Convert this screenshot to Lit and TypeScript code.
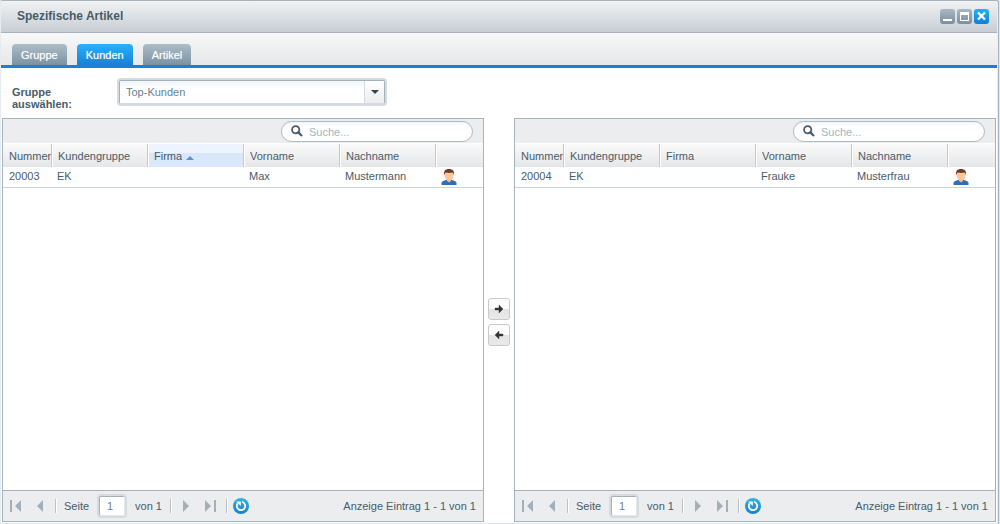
import { LitElement, html, css, svg } from "lit";
import { customElement, property } from "lit/decorators.js";

interface Customer {
  number: string;
  group: string;
  company: string;
  firstName: string;
  lastName: string;
}

const icons = {
  search: svg`<svg width="12" height="12" viewBox="0 0 12 12" fill="none" stroke="#475c6a"><circle cx="4.7" cy="4.7" r="3.6" stroke-width="1.8"/><path d="M7.4 7.4 L11 11" stroke-width="2.2"/></svg>`,
  first: svg`<svg width="12" height="12" viewBox="0 0 12 12" fill="#a3b0bb"><path d="M0 0h2v12H0zM11 0v12L5 6z"/></svg>`,
  prev: svg`<svg width="12" height="12" viewBox="0 0 12 12" fill="#a3b0bb"><path d="M9 0v12L3 6z"/></svg>`,
  next: svg`<svg width="12" height="12" viewBox="0 0 12 12" fill="#a3b0bb"><path d="M2 0v12l6-6z"/></svg>`,
  last: svg`<svg width="12" height="12" viewBox="0 0 12 12" fill="#a3b0bb"><path d="M9 0h2v12H9zM0 0v12l6-6z"/></svg>`,
  refresh: svg`<svg width="16" height="16" viewBox="0 0 16 16"><defs><linearGradient id="r" x2="0" y2="1"><stop stop-color="#36b1e4"/><stop offset="1" stop-color="#1581cb"/></linearGradient></defs><circle cx="8" cy="8" r="8" fill="url(#r)"/><path d="M4.700 5.400A4.200 4.200 0 1 0 9 3.900" fill="none" stroke="#fff" stroke-width="1.800"/><path d="M3.200 3.500h4.600v4.500z" fill="#fff"/></svg>`,
  right: svg`<svg width="10" height="8" viewBox="0 0 10 8" fill="#333"><path d="M1 3h4V0l4 4-4 4V5H1z" stroke="#333" stroke-width="0.400"/></svg>`,
  left: svg`<svg width="10" height="8" viewBox="0 0 10 8" fill="#333"><path d="M9 3H5V0L1 4l4 4V5h4z" stroke="#333" stroke-width="0.400"/></svg>`,
  user: svg`<svg width="16" height="16" viewBox="0 0 16 16"><path d="M0.500 16v-2c0-1.500 2-2.300 5-3h5c3 .7 5 1.500 5 3v2z" fill="#2f6dbd"/><path d="M6 9h4v3L8 13.500 6 12z" fill="#f1b284"/><path d="M3.500 3.500h9v2.700c0 3-2 5.300-4.500 5.300s-4.500-2.300-4.500-5.300z" fill="#fbc79c"/><path d="M3.200 6.300C2.400 2 4.200 0 8 0s5.700 2 4.800 6.300l-.8-2.500C9.500 4 7 4 4.200 3.800z" fill="#6f3d20"/></svg>`,
};

@customElement("customer-grid")
export class CustomerGrid extends LitElement {
  static styles = css`
    :host {
      display: flex;
      flex-direction: column;
      flex: 1 1 0;
      min-width: 0;
      border: 1px solid #a4b5c0;
      background: #fff;
    }
    .toolbar {
      display: flex;
      justify-content: flex-end;
      align-items: center;
      height: 25px;
      padding-right: 10px;
      background: #ebedef;
      border-bottom: 1px solid #fff;
      box-sizing: border-box;
    }
    .search {
      display: flex;
      align-items: center;
      gap: 6px;
      width: 192px;
      height: 21px;
      padding: 0 9px;
      box-sizing: border-box;
      border: 1px solid #a9bac8;
      border-radius: 11px;
      background: linear-gradient(#f3f5f6, #fff 5px);
    }
    .search svg { flex: none; }
    .search input {
      flex: 1;
      min-width: 0;
      padding: 2px 0 0;
      border: 0;
      outline: 0;
      background: none;
      font: inherit;
      color: #475c6a;
    }
    .search input::placeholder { color: #a2b4c1; opacity: 1; }
    table {
      width: 100%;
      table-layout: fixed;
      border-collapse: separate;
      border-spacing: 0;
    }
    .narrow { width: 49px; }
    .wide { width: 96px; }
    th, td {
      padding: 0 0 0 5px;
      box-sizing: border-box;
      overflow: hidden;
      white-space: nowrap;
      text-align: left;
      font-weight: normal;
    }
    th {
      height: 23px;
      padding-top: 1px;
      border-right: 1px solid #c3cbd1;
      border-left: 1px solid #fff;
      background: linear-gradient(#fafafa, #e5e6e8);
    }
    th:first-child { border-left-color: transparent; }
    th:last-child { border-right: 0; }
    .sorted { background: linear-gradient(#edf4fd 40%, #d7e6f9 40%, #d9e8fb); }
    .arrow {
      display: inline-block;
      margin-left: 4px;
      border: 4px solid transparent;
      border-top: 0;
      border-bottom-color: #5f90cf;
    }
    td {
      height: 21px;
      padding-bottom: 2px;
      border-bottom: 1px solid #cad5db;
    }
    td:first-child { padding-left: 6px; }
    td svg { display: block; margin-top: 2px; }
    .body { flex: 1; }
    .pager {
      display: flex;
      align-items: center;
      height: 30px;
      padding: 0 7px;
      border-top: 1px solid #a4b5c0;
      background: #ebedef;
    }
    .pager button {
      display: flex;
      padding: 0;
      border: 0;
      background: none;
    }
    .group { display: flex; align-items: center; gap: 9px; }
    .group button:first-of-type { margin-right: 3px; }
    .split { width: 1px; height: 14px; background: #bac3ca; border-right: 1px solid #fff; }
    .page { display: flex; align-items: center; margin: 0 8px 0 7px; }
    .page input {
      width: 26px;
      height: 20px;
      margin: 0 10px;
      padding: 0 0 0 7px;
      box-sizing: border-box;
      border: 1px solid #a4b1bd;
      border-right-color: #e3e8eb;
      border-bottom-color: #e3e8eb;
      border-radius: 2px;
      box-shadow: 0 0 0 2px #d5dbe1;
      background: #fff;
      color: #627f93;
      font: inherit;
      outline: 0;
    }
    .pager .reload { margin-left: 5px; }
    .status { margin-left: auto; white-space: nowrap; }
  `;

  @property({ attribute: false }) rows: Customer[] = [];
  @property() sort = "";

  private columns = ["Nummer", "Kundengruppe", "Firma", "Vorname", "Nachname"];

  render() {
    return html`
      <div class="toolbar">
        <label class="search">${icons.search}<input type="text" placeholder="Suche..." aria-label="Suche" /></label>
      </div>
      <div class="body">
        <table>
          <colgroup>
            <col class="narrow" /><col class="wide" /><col class="wide" /><col class="wide" /><col class="wide" /><col />
          </colgroup>
          <thead>
            <tr>
              ${this.columns.map((c) => html`<th class=${c === this.sort ? "sorted" : ""}>${c}${c === this.sort ? html`<span class="arrow"></span>` : ""}</th>`)}
              <th></th>
            </tr>
          </thead>
          <tbody>
            ${this.rows.map((r) => html`<tr>
              <td>${r.number}</td><td>${r.group}</td><td>${r.company}</td><td>${r.firstName}</td><td>${r.lastName}</td><td>${icons.user}</td>
            </tr>`)}
          </tbody>
        </table>
      </div>
      <div class="pager">
        <div class="group">
          <button aria-label="Erste Seite">${icons.first}</button>
          <button aria-label="Vorherige Seite">${icons.prev}</button>
          <span class="split"></span>
        </div>
        <label class="page">Seite<input type="text" value="1" />von 1</label>
        <div class="group">
          <span class="split"></span>
          <button aria-label="Nächste Seite">${icons.next}</button>
          <button aria-label="Letzte Seite">${icons.last}</button>
          <span class="split"></span>
        </div>
        <button class="reload" aria-label="Aktualisieren">${icons.refresh}</button>
        <span class="status">Anzeige Eintrag 1 - 1 von 1</span>
      </div>
    `;
  }
}

@customElement("app-root")
export class AppRoot extends LitElement {
  static styles = css`
    :host {
      display: flex;
      min-height: 100vh;
      box-sizing: border-box;
      padding-right: 1px;
      background: #dcebf3;
      font: 11px/13px "Liberation Sans", Arial, sans-serif;
      color: #475c6a;
    }
    .window {
      flex: 1;
      min-width: 0;
      display: flex;
      flex-direction: column;
      padding-right: 1px;
      border: 1px solid #a3b4c0;
      border-left-color: #e6ebef;
      border-bottom-color: #dfe6ea;
      border-radius: 3px 3px 0 0;
      background: linear-gradient(to left, #e9eff2 1px, #fff 1px);
      overflow: hidden;
    }
    .title {
      display: flex;
      align-items: center;
      height: 31px;
      padding: 0 8px 0 16px;
      border-bottom: 1px solid #a3b4c0;
      background: linear-gradient(#f1f2f2, #c7ced4);
    }
    h1 { flex: 1; margin: 0; padding-bottom: 2px; font-size: 12px; line-height: 14px; }
    .tools { display: flex; gap: 2px; }
    .tools button {
      display: flex;
      width: 15px;
      height: 15px;
      padding: 0;
      border: 0;
      border-radius: 3px;
      background: linear-gradient(#a9b8c4, #7a8e9e);
    }
    .tools .close { background: linear-gradient(#22b2fb, #0c7ed6); }
    nav {
      display: flex;
      align-items: flex-end;
      gap: 10px;
      height: 32px;
      padding: 0 11px;
      border-bottom: 3px solid #1a7fd5;
      background: linear-gradient(#f8f8f8, #e6e7e9);
    }
    nav button {
      height: 21px;
      padding: 1px 9px 0;
      border: 0;
      border-radius: 4px 4px 0 0;
      background: linear-gradient(#adbdc8, #7b92a2);
      color: #fff;
      font: inherit;
      text-shadow: 0 0 1px rgba(255, 255, 255, 0.5);
    }
    nav .active { background: linear-gradient(#2ab1fb, #1a7fd5); }
    .field { display: flex; padding: 10px 11px 8px; }
    .field label {
      width: 107px;
      padding: 8px 27px 0 0;
      box-sizing: border-box;
      font-weight: bold;
      line-height: 12px;
    }
    .combo {
      display: grid;
      width: 266px;
      height: 24px;
      margin-top: 2px;
      box-sizing: border-box;
      border: 1px solid #a4b1bd;
      border-bottom-color: #d5dbe1;
      border-radius: 2px;
      box-shadow: 0 0 0 2px #d5dbe1;
      background: linear-gradient(#f1f4f5, #fff 8px);
    }
    .combo select, .trigger { grid-area: 1 / 1; }
    .combo select {
      appearance: none;
      width: 100%;
      padding: 0 24px 0 6px;
      border: 0;
      outline: 0;
      background: none;
      color: #627f93;
      font: inherit;
    }
    .trigger {
      justify-self: end;
      display: grid;
      place-items: center;
      width: 19px;
      border-left: 1px solid #d5dbe1;
      background: linear-gradient(#fff, #eaecee);
      pointer-events: none;
    }
    .trigger::before {
      content: "";
      border: 4px solid transparent;
      border-top-color: #354550;
      border-bottom: 0;
    }
    .lists { flex: 1; display: flex; padding: 0 1px 1px 1px; }
    .move {
      width: 30px;
      padding-top: 4px;
      display: flex;
      flex-direction: column;
      align-items: center;
      justify-content: center;
      gap: 4px;
    }
    .move button {
      display: grid;
      place-items: center;
      width: 22px;
      height: 22px;
      padding: 0;
      border: 1px solid #c9c9c9;
      border-radius: 3px;
      background: linear-gradient(#fcfcfc 50%, #e3e3e3 50%, #eaeaea);
    }
  `;

  private left: Customer[] = [{ number: "20003", group: "EK", company: "", firstName: "Max", lastName: "Mustermann" }];
  private right: Customer[] = [{ number: "20004", group: "EK", company: "", firstName: "Frauke", lastName: "Musterfrau" }];

  render() {
    return html`
      <div class="window">
        <header class="title">
          <h1>Spezifische Artikel</h1>
          <div class="tools">
            <button aria-label="Minimieren"><svg width="15" height="15"><path d="M3 10h9v2H3z" fill="#fff" /></svg></button>
            <button aria-label="Maximieren"><svg width="15" height="15"><path d="M3 3h9v9H3zM4 6v5h7V6z" fill="#fff" fill-rule="evenodd" /></svg></button>
            <button class="close" aria-label="Schließen"><svg width="15" height="15"><path d="M4 3.500l7 7M11 3.500l-7 7" stroke="#fff" stroke-width="2.400" /></svg></button>
          </div>
        </header>
        <nav>
          <button>Gruppe</button>
          <button class="active">Kunden</button>
          <button>Artikel</button>
        </nav>
        <div class="field">
          <label for="group">Gruppe auswählen:</label>
          <div class="combo">
            <select id="group"><option>Top-Kunden</option></select>
            <span class="trigger"></span>
          </div>
        </div>
        <div class="lists">
          <customer-grid .rows=${this.left} sort="Firma"></customer-grid>
          <div class="move">
            <button aria-label="Hinzufügen">${icons.right}</button>
            <button aria-label="Entfernen">${icons.left}</button>
          </div>
          <customer-grid .rows=${this.right}></customer-grid>
        </div>
      </div>
    `;
  }
}
